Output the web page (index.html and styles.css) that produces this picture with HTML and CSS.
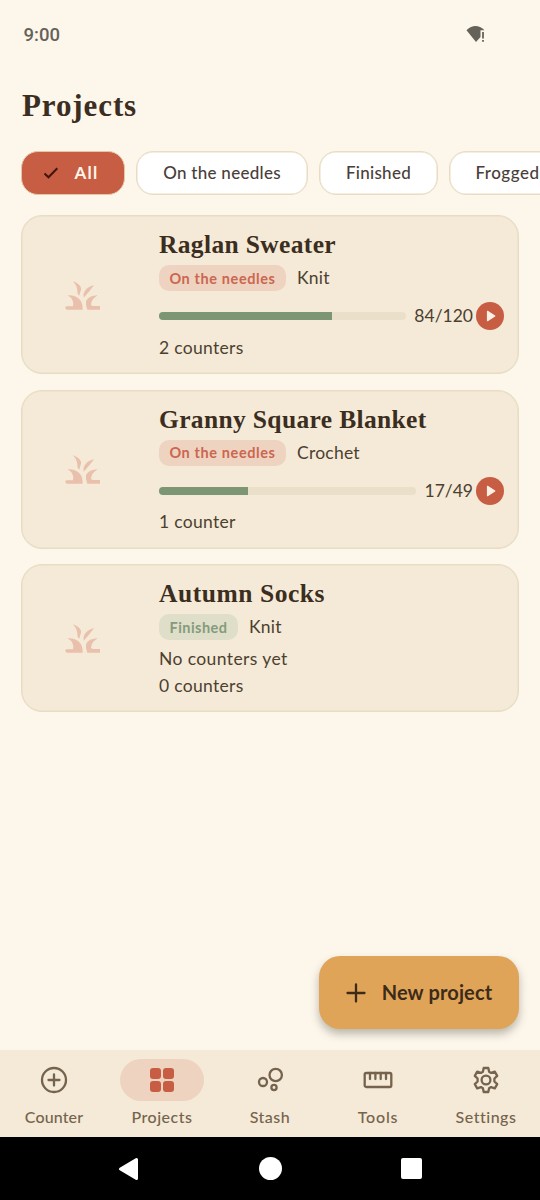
FILE: index.html
```html
<!DOCTYPE html>
<html lang="en">
<head>
<meta charset="utf-8">
<title>Projects</title>
<link rel="stylesheet" href="styles.css">
</head>
<body>
<svg class="defs" aria-hidden="true">
  <symbol id="leaf" viewBox="195 225 105 87">
    <path d="M219 226C235 232 245 241 243 251Q240 259 238 269Q231 264 232 254Q232 241 219 226Z"/>
    <path d="M282 238Q269 256 251 275Q248 264 255 254Q264 242 282 238Z"/>
    <path d="M203 268C230 266 250 282 248 311H201Q195 309 196 303Q198 300 205 301H219Q224 281 203 268Z"/>
    <path d="M293 268Q272 282 273 297Q276 301 283 300H300V311H262Q256 296 258 285Q267 269 293 268Z"/>
  </symbol>
  <symbol id="play" viewBox="0 0 28 28">
    <circle cx="14" cy="14" r="14" fill="#c75d43"/>
    <path d="M11.500 9.300v9.400l7.300-4.700z" fill="#fdf0e4" stroke="#fdf0e4" stroke-width="1.200" stroke-linejoin="round"/>
  </symbol>
</svg>
<div class="screen">
  <header class="status">
    <span class="time">9:00</span>
    <svg class="wifi" width="20" height="18" viewBox="0 0 20 18"><path d="M0.500 5.200Q9.500-3 18.500 5.200H14.500V12L10 17Z" fill="#65625a"/><path d="M17 7v6.500M17 15v1.800" stroke="#65625a" stroke-width="1.800"/></svg>
  </header>
  <h1 class="title"><span>Projects</span></h1>
  <div class="filters">
    <button class="filter filter-on"><svg width="16" height="12" viewBox="0 0 16 12"><path d="M1.500 6.500 5.500 10.300 14.300 1.300" fill="none" stroke="#40150b" stroke-width="2"/></svg><span class="t-all">All</span></button>
    <button class="filter f-needles"><span>On the needles</span></button>
    <button class="filter f-finished"><span>Finished</span></button>
    <button class="filter f-frogged"><span>Frogged</span></button>
  </div>
  <main class="cards">
    <article class="card">
      <div class="thumb"><svg class="leaf"><use href="#leaf"/></svg></div>
      <div class="info">
        <h2>Raglan Sweater</h2>
        <div class="meta"><span class="badge b-needles">On the needles</span><span class="craft">Knit</span></div>
        <div class="progress"><div class="track"><div class="fill" style="width:70%"></div></div><span class="count">84/120</span><svg class="play"><use href="#play"/></svg></div>
        <p class="counters">2 counters</p>
      </div>
    </article>
    <article class="card">
      <div class="thumb"><svg class="leaf"><use href="#leaf"/></svg></div>
      <div class="info">
        <h2>Granny Square Blanket</h2>
        <div class="meta"><span class="badge b-needles">On the needles</span><span class="craft">Crochet</span></div>
        <div class="progress"><div class="track"><div class="fill" style="width:34.7%"></div></div><span class="count">17/49</span><svg class="play"><use href="#play"/></svg></div>
        <p class="counters">1 counter</p>
      </div>
    </article>
    <article class="card">
      <div class="thumb"><svg class="leaf"><use href="#leaf"/></svg></div>
      <div class="info">
        <h2 class="n-socks">Autumn Socks</h2>
        <div class="meta"><span class="badge b-finished">Finished</span><span class="craft">Knit</span></div>
        <p class="none">No counters yet</p>
        <p class="counters c-tight">0 counters</p>
      </div>
    </article>
  </main>
  <div class="actions">
    <button class="fab"><svg width="20" height="20" viewBox="0 0 20 20"><path d="M10 1.500v17M1.500 10h17" stroke="#3d2b1a" stroke-width="2.300" stroke-linecap="round"/></svg><span>New project</span></button>
  </div>
  <nav class="tabs">
    <a class="tab"><span class="pill"><svg width="28" height="28" viewBox="0 0 28 28"><circle cx="14" cy="14" r="12"/><path d="M14 8.500v11M8.500 14h11"/></svg></span><span class="label l-counter">Counter</span></a>
    <a class="tab"><span class="pill pill-on"><svg width="28" height="28" viewBox="0 0 28 28"><rect x="2" y="2" width="11" height="11" rx="3"/><rect x="15" y="2" width="11" height="11" rx="3"/><rect x="2" y="15" width="11" height="11" rx="3"/><rect x="15" y="15" width="11" height="11" rx="3"/></svg></span><span class="label">Projects</span></a>
    <a class="tab"><span class="pill"><svg width="28" height="28" viewBox="0 0 28 28"><circle cx="19.700" cy="9" r="6.200"/><circle cx="7" cy="16" r="4"/><circle cx="18" cy="21.500" r="2.600"/></svg></span><span class="label">Stash</span></a>
    <a class="tab"><span class="pill"><svg width="30" height="28" viewBox="0 0 30 28"><rect x="1.700" y="7" width="26.600" height="14" rx="1.500"/><path d="M7 7v6M12.400 7v6M17.700 7v6M23 7v6"/></svg></span><span class="label l-tools">Tools</span></a>
    <a class="tab"><span class="pill"><svg width="28" height="28" viewBox="0 0 28 28"><path d="M11.700 2H16.300L17.100 5.700 19.100 6.900 22.800 5.700 25.200 9.800 22.400 12.500V15.500L25.200 18.200 22.800 22.300 19.100 21.100 17.100 22.300 16.300 26H11.700L10.900 22.300 8.900 21.100 5.200 22.300 2.800 18.200 5.600 15.500V12.500L2.800 9.800 5.200 5.700 8.900 6.900 10.900 5.700Z"/><circle cx="14" cy="14" r="4.400"/></svg></span><span class="label">Settings</span></a>
  </nav>
  <footer class="system">
    <svg width="22" height="24" viewBox="0 0 22 24"><path d="M3.500 12 19.500 2.500V21.500Z" fill="#fff" stroke="#fff" stroke-width="3" stroke-linejoin="round"/></svg>
    <span class="home"></span>
    <span class="recent"></span>
  </footer>
</div>
</body>
</html>
```
FILE: styles.css
```css
* { box-sizing: border-box; }
body { margin: 0; background: #fdf6eb; font-family: Lato, sans-serif; color: #4d3f30; }
h1, h2, p { margin: 0; }
button { border: 0; padding: 0; font: inherit; color: inherit; }
span { white-space: nowrap; }
svg { flex: none; display: block; }
.defs { position: absolute; width: 0; height: 0; }
.screen { width: 540px; height: 1200px; display: flex; flex-direction: column; overflow: hidden; }

.status { height: 70px; padding: 0 54.5px 0 23.5px; display: flex; align-items: center; justify-content: space-between; }
.time { font: 500 18.5px/24px Roboto, sans-serif; color: #65625a; }
.wifi { margin-top: -2px; }
.title { height: 81px; padding: 17px 22px 0; font: bold 31px/38px "Liberation Serif", serif; color: #3b2d20; }
.title span { letter-spacing: 0.9px; }

.filters { display: flex; gap: 11px; padding-left: 21px; height: 44px; }
.filter { flex: none; display: flex; align-items: center; justify-content: center; height: 44px; background: #fff; border: 1px solid #e8ddc3; box-shadow: inset 0 0 0 0.5px #e8ddc3; border-radius: 17px; font-size: 17px; font-weight: 500; line-height: 24px; letter-spacing: 0.28px; color: #493e39; }
.filter-on { width: 104px; gap: 15px; padding-right: 4px; background: #c75d43; border-color: #e5c7a4; box-shadow: none; color: #fff5ea; font-weight: 700; }
.t-all { letter-spacing: 1.3px; }
.f-needles { width: 172px; }
.f-finished { width: 119px; }
.f-frogged { width: 119px; padding-right: 2px; letter-spacing: 0.5px; }

.cards { display: flex; flex-direction: column; gap: 15.5px; padding: 20px 21px 0; }
.card { display: flex; background: #f4ead7; border: 1px solid #e8ddc3; box-shadow: inset 0 0 0 0.5px #e8ddc3; border-radius: 21px; padding: 13px 14px 12.5px; }
.thumb { width: 123px; display: flex; align-items: center; justify-content: center; padding: 1px 30px 0 0; }
.leaf { width: 35px; height: 29px; fill: #e9c0ab; }
.info { flex: 1; min-width: 0; }
.card h2 { height: 32px; font: bold 25.5px/32px "Liberation Serif", serif; letter-spacing: 0.35px; white-space: nowrap; color: #3b2d20; }
.card .n-socks { letter-spacing: 0.55px; }
.meta { margin-top: 4px; height: 26px; display: flex; align-items: center; gap: 11px; }
.badge { display: flex; align-items: center; justify-content: center; height: 26px; border-radius: 10px; font-size: 14.5px; font-weight: 700; letter-spacing: 0.6px; }
.b-needles { width: 127px; background: #eed3c0; color: #cb6650; }
.b-finished { width: 79px; background: #dfdec8; color: #859b7c; letter-spacing: 0.45px; }
.craft, .count, .none, .counters { font-size: 17.5px; line-height: 26px; letter-spacing: 0.3px; }
.craft { letter-spacing: 0.25px; }
.progress { margin-top: 11px; height: 28px; display: flex; align-items: center; }
.track { flex: 1; height: 8px; border-radius: 4px; background: #eadfc8; overflow: hidden; }
.fill { height: 8px; background: #7c9573; }
.count { margin-left: 8px; letter-spacing: 0; }
.play { width: 28px; height: 28px; margin-left: 3px; }
.counters { margin-top: 4.5px; }
.none { margin-top: 6px; letter-spacing: 0.4px; }
.c-tight { margin-top: 0.5px; }

.actions { flex: 1; display: flex; align-items: flex-end; justify-content: flex-end; padding: 0 21px 21px 0; }
.fab { width: 200px; height: 73px; display: flex; align-items: center; justify-content: center; gap: 16px; background: #e0a458; border-radius: 21px; box-shadow: 0 5px 8px rgba(60, 65, 45, 0.34); color: #3d2b1a; font-size: 20px; font-weight: 700; letter-spacing: 0.15px; }
.fab span { margin-top: -2px; }

.tabs { height: 87px; display: flex; background: #f4ead7; }
.tab { flex: 1; display: flex; flex-direction: column; align-items: center; padding-top: 9px; color: #75634d; }
.pill { width: 84px; height: 42px; border-radius: 21px; display: flex; align-items: center; justify-content: center; }
.pill svg { fill: none; stroke: #75634d; stroke-width: 2.3; stroke-linecap: round; stroke-linejoin: round; }
.pill-on { background: #eed3c0; }
.pill-on svg { fill: #c75d43; stroke: none; }
.label { margin-top: 4px; font-size: 16px; font-weight: 500; line-height: 24px; letter-spacing: 0.5px; }
.l-counter { letter-spacing: 0.15px; }
.l-tools { letter-spacing: 0.8px; }

.system { height: 63px; background: #000; display: flex; align-items: center; justify-content: center; gap: 119.5px; padding-right: 1px; }
.home { width: 23px; height: 23px; border-radius: 50%; background: #fff; }
.recent { width: 20.5px; height: 20.5px; border-radius: 2px; background: #fff; }
```
